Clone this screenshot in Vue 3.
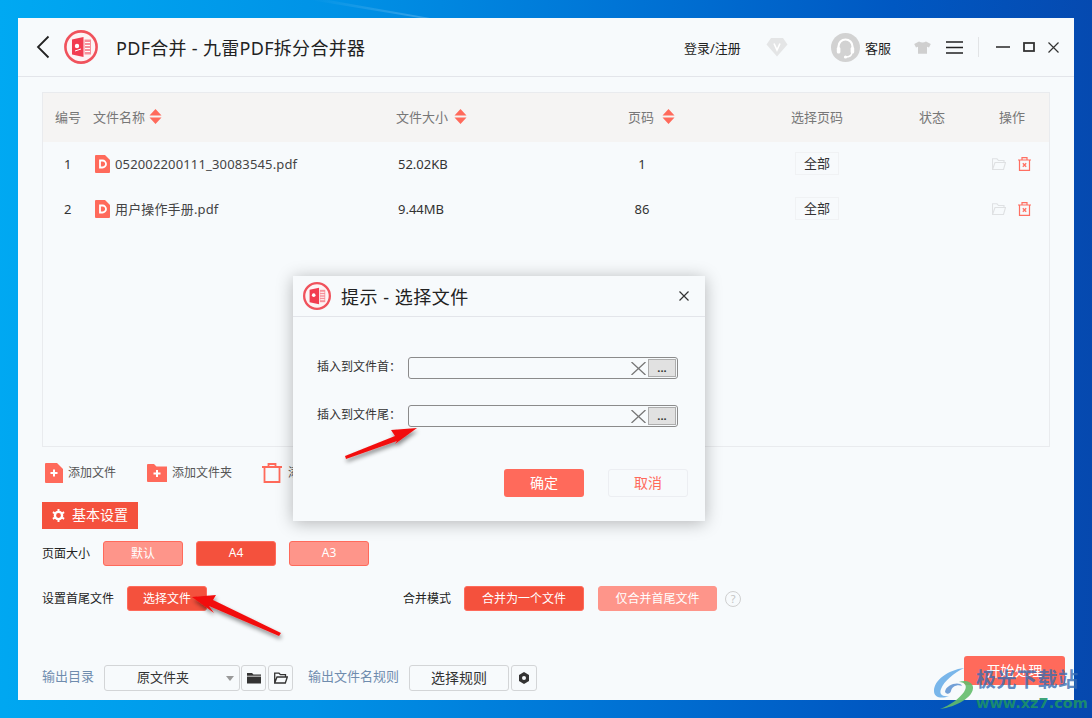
<script setup>
const columns = [
  { label: '编号', sort: false },
  { label: '文件名称', sort: true },
  { label: '文件大小', sort: true },
  { label: '页码', sort: true },
  { label: '选择页码', sort: false },
  { label: '状态', sort: false },
  { label: '操作', sort: false },
]

const files = [
  { id: 1, name: '052002200111_30083545.pdf', size: '52.02KB', pages: 1 },
  { id: 2, name: '用户操作手册.pdf', size: '9.44MB', pages: 86 },
]

const dialogRows = ['插入到文件首：', '插入到文件尾：']
</script>

<template>
  <div class="page">
    <svg class="streak" width="120" height="18" viewBox="0 0 120 18">
      <path d="M0 0 L18 0 L120 18 L110 18 Z" fill="url(#streakfill)" />
      <defs>
        <linearGradient id="streakfill" x1="0" x2="1">
          <stop offset="0" stop-color="#fff" stop-opacity="0" />
          <stop offset="1" stop-color="#fff" stop-opacity="0.22" />
        </linearGradient>
      </defs>
    </svg>

    <div class="window">
      <header class="head">
        <svg class="back" width="14" height="24" viewBox="0 0 14 24">
          <path d="M12.5 1.5 L2 12 L12.5 22.5" fill="none" stroke="#222" stroke-width="1.8" />
        </svg>
        <svg class="logo" width="34" height="34" viewBox="0 0 34 34">
          <circle cx="17" cy="17" r="15.6" fill="#fdf3f4" stroke="#f0525c" stroke-width="2.6" />
          <path d="M8 9.5 L19.5 7 V27 L8 24.5 Z" fill="#f23c50" />
          <path d="M20.5 9.5 H27 V24.5 H20.5 Z" fill="#f7909a" />
          <path d="M21 12.5 H26 M21 15.5 H26 M21 18.5 H26 M21 21.5 H26" stroke="#fff" stroke-width="1.2" />
          <circle cx="13" cy="16" r="2.2" fill="#fff" />
          <path d="M11 21 L17 19" stroke="#fff" stroke-width="1" />
        </svg>
        <h1 class="app-title">PDF合并 - 九雷PDF拆分合并器</h1>

        <span class="login">登录/注册</span>
        <svg class="vip" width="22" height="20" viewBox="0 0 22 20">
          <path d="M5 1 H17 L21.5 7.5 L11 19.5 L0.5 7.5 Z" fill="#e4e5e6" />
          <path d="M8 6.5 L11 13 L14 6.5" fill="none" stroke="#fff" stroke-width="1.6" />
        </svg>
        <svg class="agent" width="29" height="29" viewBox="0 0 29 29">
          <circle cx="14.5" cy="14.5" r="14.5" fill="#d2d2d2" />
          <path d="M7.5 16 V13.5 a7 7 0 0 1 14 0 V16" fill="none" stroke="#fff" stroke-width="2.2" />
          <rect x="5.8" y="14" width="3.6" height="6.5" rx="1.6" fill="#fff" />
          <rect x="19.6" y="14" width="3.6" height="6.5" rx="1.6" fill="#fff" />
          <path d="M21 20 Q20 24 15 24" fill="none" stroke="#fff" stroke-width="1.5" />
          <circle cx="14.5" cy="24" r="1.6" fill="#fff" />
        </svg>
        <span class="service">客服</span>
        <svg class="shirt" width="17" height="13" viewBox="0 0 17 13">
          <path d="M5 0.5 Q8.5 2.5 12 0.5 L16.8 3 L15 6.5 L13 5.8 V12.8 H4 V5.8 L2 6.5 L0.2 3 Z" fill="#cfcfcf" />
        </svg>
        <svg class="menu" width="17" height="13" viewBox="0 0 17 13">
          <path d="M0 1 H17 M0 6.5 H17 M0 12 H17" stroke="#222" stroke-width="1.4" />
        </svg>
        <i class="divider"></i>
        <svg class="win-btn min" width="14" height="14" viewBox="0 0 14 14">
          <path d="M0 7 H14" stroke="#333" stroke-width="1.6" />
        </svg>
        <svg class="win-btn max" width="12" height="10" viewBox="0 0 12 10">
          <rect x="1" y="1" width="10" height="8" fill="none" stroke="#333" stroke-width="1.8" />
        </svg>
        <svg class="win-btn close" width="11" height="11" viewBox="0 0 11 11">
          <path d="M0.5 0.5 L10.5 10.5 M10.5 0.5 L0.5 10.5" stroke="#333" stroke-width="1.2" />
        </svg>
      </header>

      <main class="body">
        <section class="table">
          <div class="row row-head">
            <div v-for="col in columns" :key="col.label" class="cell">
              {{ col.label }}
              <svg v-if="col.sort" class="sort" width="13" height="15" viewBox="0 0 12 15">
                <path d="M6 0 L12 6.5 H0 Z M0 8.5 H12 L6 15 Z" fill="#ff6a5b" />
              </svg>
            </div>
          </div>
          <div v-for="file in files" :key="file.id" class="row">
            <div class="cell num">{{ file.id }}</div>
            <div class="cell name">
              <svg width="15" height="18" viewBox="0 0 15 18">
                <path d="M1 0 H10 L15 5 V17 a1 1 0 0 1 -1 1 H1 a1 1 0 0 1 -1 -1 V1 a1 1 0 0 1 1 -1 Z" fill="#ff6a5b" />
                <path d="M5 5.5 H7.5 a3.5 3.5 0 0 1 0 7 H5 Z" fill="none" stroke="#fff" stroke-width="1.8" />
              </svg>
              {{ file.name }}
            </div>
            <div class="cell size">{{ file.size }}</div>
            <div class="cell pages">{{ file.pages }}</div>
            <div class="cell"><span class="all">全部</span></div>
            <div class="cell"></div>
            <div class="cell actions">
              <svg width="14" height="12" viewBox="0 0 14 12">
                <path d="M0.5 11.5 V0.8 H5 L6.5 2.5 H12 V4.5 M0.5 11.5 L3 4.5 H13.5 L11.5 11.5 Z" fill="none" stroke="#dfe1e3" stroke-width="1.1" />
              </svg>
              <svg width="13" height="14" viewBox="0 0 13 14">
                <path d="M0 3 H13 M4 3 V0.7 H9 V3 M1.5 3 V13.3 H11.5 V3" fill="none" stroke="#ff6f62" stroke-width="1.2" />
                <path d="M4.8 6.2 L8.2 9.8 M8.2 6.2 L4.8 9.8" stroke="#ff6f62" stroke-width="1.3" />
              </svg>
            </div>
          </div>
        </section>

        <div class="toolbar">
          <span class="tool">
            <svg width="18" height="20" viewBox="0 0 18 20">
              <path d="M0 1 a1 1 0 0 1 1 -1 H12 L18 6 V20 H1 a1 1 0 0 1 -1 -1 Z" fill="#ff6a5b" />
              <path d="M9 6.5 V13.5 M5.5 10 H12.5" stroke="#fff" stroke-width="2" />
            </svg>
            <span class="tool-text">添加文件</span>
          </span>
          <span class="tool second">
            <svg width="20" height="18" viewBox="0 0 20 18">
              <path d="M0 1 a1 1 0 0 1 1 -1 H7 L9.5 2.5 H20 V18 H1 a1 1 0 0 1 -1 -1 Z" fill="#ff6a5b" />
              <path d="M10 6 V13 M6.5 9.5 H13.5" stroke="#fff" stroke-width="2" />
            </svg>
            <span class="tool-text">添加文件夹</span>
          </span>
          <span class="tool third">
            <svg width="20" height="20" viewBox="0 0 20 20">
              <path d="M0 4 H20 M6.5 4 V1 H13.5 V4 M2.5 4 V19 H17.5 V4" fill="none" stroke="#ff6a5b" stroke-width="1.8" />
            </svg>
            <span class="tool-text">添加</span>
          </span>
        </div>

        <div class="tab">
          <svg width="13" height="13" viewBox="0 0 13 13">
            <circle cx="6.5" cy="6.5" r="3.6" fill="none" stroke="#fff" stroke-width="2.4" />
            <path d="M6.5 0 V13 M0.9 3.2 L12.1 9.8 M12.1 3.2 L0.9 9.8" stroke="#fff" stroke-width="2" stroke-dasharray="2.2 8.6 2.2" />
          </svg>
          <span class="tab-text">基本设置</span>
        </div>

        <div class="opt-row size-row">
          <span class="opt-label">页面大小</span>
          <button class="btn off">默认</button>
          <button class="btn on">A4</button>
          <button class="btn off">A3</button>
        </div>

        <div class="opt-row mode-row">
          <span class="opt-label">设置首尾文件</span>
          <button class="btn on pick">选择文件</button>
          <span class="opt-label mode-label">合并模式</span>
          <button class="btn on merge">合并为一个文件</button>
          <button class="btn off merge-ends">仅合并首尾文件</button>
          <span class="help">?</span>
        </div>

        <div class="output">
          <span class="out-label">输出目录</span>
          <div class="select">原文件夹<i class="caret"></i></div>
          <button class="square first-square">
            <svg width="14" height="12" viewBox="0 0 14 12">
              <path d="M0 1 H5 L6.5 2.5 H14 V11.5 H0 Z" fill="#333" />
              <path d="M0 4.2 H14" stroke="#fff" stroke-width="0.8" />
            </svg>
          </button>
          <button class="square">
            <svg width="14" height="12" viewBox="0 0 14 12">
              <path d="M0.7 11 V1.2 H5 L6.5 2.7 H11.5 V5 M0.7 11 L3 5 H13.3 L11.3 11 Z" fill="none" stroke="#333" stroke-width="1.3" />
            </svg>
          </button>
          <span class="out-label rule-label">输出文件名规则</span>
          <button class="rule">选择规则</button>
          <button class="square gear">
            <svg width="12" height="12" viewBox="0 0 12 12">
              <path d="M6 0 L11 3 V9 L6 12 L1 9 V3 Z" fill="#333" />
              <circle cx="6" cy="6" r="2" fill="#f7fafc" />
            </svg>
          </button>
          <button class="start">开始处理</button>
        </div>
      </main>

      <div class="dialog">
        <div class="dialog-head">
          <svg width="28" height="28" viewBox="0 0 34 34">
            <circle cx="17" cy="17" r="15.6" fill="#fdf3f4" stroke="#f0525c" stroke-width="2.8" />
            <path d="M8 9.5 L19.5 7 V27 L8 24.5 Z" fill="#f23c50" />
            <path d="M20.5 9.5 H27 V24.5 H20.5 Z" fill="#f7909a" />
            <path d="M21 12.5 H26 M21 15.5 H26 M21 18.5 H26 M21 21.5 H26" stroke="#fff" stroke-width="1.2" />
            <circle cx="13" cy="16" r="2.2" fill="#fff" />
          </svg>
          <span class="dialog-title">提示 - 选择文件</span>
          <svg class="dialog-close" width="10" height="10" viewBox="0 0 10 10">
            <path d="M0.5 0.5 L9.5 9.5 M9.5 0.5 L0.5 9.5" stroke="#333" stroke-width="1.2" />
          </svg>
        </div>
        <div class="dialog-body">
          <div v-for="label in dialogRows" :key="label" class="field">
            <span class="field-label">{{ label }}</span>
            <div class="input">
              <svg width="15" height="13" viewBox="0 0 15 13">
                <path d="M0.5 0 L14.5 13 M14.5 0 L0.5 13" stroke="#777" stroke-width="1.3" />
              </svg>
              <span class="browse">...</span>
            </div>
          </div>
        </div>
        <div class="dialog-foot">
          <button class="ok">确定</button>
          <button class="cancel">取消</button>
        </div>
      </div>
    </div>

    <svg class="arrows" width="1092" height="718" viewBox="0 0 1092 718">
      <defs>
        <filter id="arrowshadow" x="-20%" y="-40%" width="150%" height="200%">
          <feDropShadow dx="1" dy="3" stdDeviation="2" flood-color="#000" flood-opacity="0.45" />
        </filter>
      </defs>
      <g fill="#f21010" filter="url(#arrowshadow)">
        <path d="M417 428 L391 430 L395 436 L345 456 L346 459 L397 441 L395 444 Z" />
        <path d="M192 597 L216 595 L213 600 L281 633 L279 636 L209 606 L214 613 Z" />
      </g>
    </svg>

    <div class="watermark">
      <svg width="44" height="44" viewBox="0 0 44 44">
        <path d="M32 1 C16 3 2 13 2 24 C2 31 10 32 17 29 C10 30 7 27 9 22 C12 14 22 6 32 1 Z" fill="#6aaee8" opacity="0.9" />
        <path d="M13 25 C14 17 28 14 30 19 C26 17 20 19 19 24 C18 27 15 28 13 25 Z" fill="#5b8fd0" opacity="0.85" />
        <path d="M8 42 C24 40 42 30 41 20 C40 14 32 13 27 15 C33 15 36 19 32 25 C27 32 18 38 8 42 Z" fill="#63bd6c" opacity="0.9" />
      </svg>
      <div class="wm-text">
        <span class="wm-cn">极光下载站</span>
        <span class="wm-en">www.xz7.com</span>
      </div>
    </div>
  </div>
</template>

<style>
html,
body {
  margin: 0;
  overflow: hidden;
}
</style>

<style scoped>
.page {
  position: relative;
  width: 1092px;
  height: 718px;
  padding: 18px;
  box-sizing: border-box;
  overflow: hidden;
  background: linear-gradient(92deg, #00a9f2 0%, #0092e6 30%, #0075d6 55%, #0058c2 80%, #0648ae 100%);
  font-family: "Noto Sans", "Noto Sans CJK SC", sans-serif;
  color: #333;
}

.streak {
  position: absolute;
  left: 310px;
  top: 0;
}

button {
  font-family: inherit;
  padding: 0;
  cursor: pointer;
}

.window {
  position: relative;
  width: 1056px;
  height: 682px;
  background: #f7fafc;
  display: flex;
  flex-direction: column;
}

.head {
  height: 58px;
  flex: none;
  display: flex;
  align-items: center;
  padding-left: 18px;
  border-bottom: 1px solid #e3e5ea;
}

.logo {
  margin-left: 14px;
}

.app-title {
  margin: 0 0 0 18px;
  font-size: 18px;
  letter-spacing: 0.3px;
  font-weight: 400;
  color: #222;
  white-space: nowrap;
  width: 568px;
}

.login {
  font-size: 13px;
  color: #222;
  width: 58px;
  white-space: nowrap;
}

.vip {
  margin-left: 24px;
}

.agent {
  margin-left: 43px;
}

.service {
  margin-left: 5px;
  font-size: 13px;
  color: #222;
}

.shirt {
  margin-left: 23px;
}

.menu {
  margin-left: 15px;
}

.divider {
  width: 1px;
  height: 20px;
  margin-left: 15px;
  background: #e2e4e6;
}

.min {
  margin-left: 17px;
}

.max {
  margin-left: 13px;
}

.close {
  margin-left: 13px;
}

.body {
  flex: 1;
  padding: 15px 24px 0;
  display: flex;
  flex-direction: column;
  min-height: 0;
}

.table {
  height: 355px;
  flex: none;
  box-sizing: border-box;
  border: 1px solid #e9ebee;
}

.row {
  display: grid;
  grid-template-columns: 50px 303px 232px 130px 118px 112px 61px;
  height: 45px;
  box-sizing: border-box;
  padding-bottom: 2px;
  align-items: center;
  font-size: 13px;
}

.row-head {
  height: 49px;
  background: #f5f4f3;
  color: #777;
}

.cell {
  display: flex;
  align-items: center;
  white-space: nowrap;
}

.row-head .cell:first-child {
  padding-left: 12px;
}

.row-head .cell:nth-child(n + 5) {
  justify-content: center;
}

.row-head .cell:last-child {
  padding-right: 13px;
}

.row-head .sort {
  margin-left: 4px;
}

.row-head .cell:nth-child(3) .sort {
  margin-left: 6px;
}

.row-head .cell:nth-child(4) .sort {
  margin-left: 8px;
}

.row .cell:nth-child(5) {
  justify-content: center;
}

.num {
  padding-left: 21px;
}

.name {
  gap: 5px;
  padding-left: 2px;
  letter-spacing: 0.15px;
  color: #444;
}

.size {
  padding-left: 2px;
}

.pages {
  width: 28px;
  justify-content: center;
}

.all {
  border: 1px solid #f0f2f4;
  padding: 0 8px;
  line-height: 21px;
  color: #333;
}

.actions {
  gap: 12px;
  padding-left: 4px;
}

.toolbar {
  margin-top: 13px;
  height: 26px;
  flex: none;
  display: flex;
  align-items: center;
  font-size: 12px;
  color: #555;
}

.tool {
  display: flex;
  align-items: center;
  gap: 5px;
  margin-left: 3px;
  white-space: nowrap;
}

.tool-text {
  margin-top: -2px;
}

.second {
  margin-left: 31px;
}

.third {
  margin-left: 30px;
  gap: 6px;
}

.tab {
  margin-top: 16px;
  width: 96px;
  height: 27px;
  flex: none;
  box-sizing: border-box;
  display: flex;
  align-items: center;
  gap: 7px;
  padding-left: 10px;
  background: #f4513d;
  color: #fff;
  font-size: 14px;
}

.tab-text {
  margin-top: -3px;
}

.opt-row {
  display: flex;
  align-items: center;
  height: 25px;
  flex: none;
}

.size-row {
  margin-top: 12px;
}

.mode-row {
  margin-top: 20px;
}

.opt-label {
  font-size: 12px;
  color: #222;
  white-space: nowrap;
  margin-top: -2px;
}

.btn {
  width: 80px;
  height: 25px;
  padding-bottom: 2px;
  border-radius: 3px;
  border: 1px solid #ff6a5b;
  color: #fff;
  font-size: 12px;
  margin-left: 13px;
}

.on {
  background: #f4513d;
}

.off {
  background: #fe958a;
}

.mode-label {
  margin-left: 196px;
}

.merge {
  width: 120px;
}

.merge-ends {
  width: 119px;
  margin-left: 14px;
  border-color: #fe958a;
}

.help {
  width: 16px;
  height: 16px;
  margin-left: 8px;
  box-sizing: border-box;
  border: 1.5px solid #cfcfcf;
  border-radius: 50%;
  color: #c4c4c4;
  font-size: 11px;
  line-height: 13px;
  text-align: center;
}

.output {
  margin-top: 54px;
  margin-right: -15px;
  display: flex;
  align-items: center;
  height: 26px;
  flex: none;
}

.out-label {
  font-size: 13px;
  color: #6f8cae;
  white-space: nowrap;
  margin-top: -5px;
}

.select {
  position: relative;
  width: 136px;
  height: 26px;
  margin-left: 10px;
  box-sizing: border-box;
  border: 1px solid #d3d5d7;
  border-radius: 3px;
  font-size: 13px;
  line-height: 22px;
  padding-left: 32px;
  color: #333;
}

.caret {
  position: absolute;
  right: 5px;
  top: 10px;
  border: 4px solid transparent;
  border-top: 5px solid #999;
  border-bottom: 0;
}

.square {
  width: 25px;
  height: 26px;
  margin-left: 2px;
  background: transparent;
  border: 1px solid #d3d5d7;
  border-radius: 3px;
  display: flex;
  align-items: center;
  justify-content: center;
}

.first-square {
  margin-left: 1px;
}

.rule-label {
  margin-left: 15px;
}

.rule {
  width: 100px;
  height: 26px;
  padding-bottom: 2px;
  margin-left: 10px;
  background: transparent;
  border: 1px solid #d3d5d7;
  border-radius: 3px;
  font-size: 14px;
  color: #333;
}

.gear {
  width: 26px;
}

.start {
  margin-left: auto;
  margin-top: -9px;
  align-self: flex-start;
  width: 101px;
  height: 29px;
  padding-bottom: 2px;
  border: 0;
  border-radius: 3px;
  background: #ff6a5b;
  color: #fff;
  font-size: 14px;
}

.dialog {
  position: absolute;
  left: 275px;
  top: 258px;
  width: 412px;
  height: 245px;
  background: #f7fafc;
  box-shadow: 0 2px 16px rgba(0, 0, 0, 0.28);
  display: flex;
  flex-direction: column;
}

.dialog-head {
  height: 40px;
  flex: none;
  display: flex;
  align-items: center;
  padding-left: 10px;
  border-bottom: 1px solid #e3e5ea;
}

.dialog-title {
  margin-left: 10px;
  font-size: 18px;
  letter-spacing: 0.5px;
  color: #222;
}

.dialog-close {
  margin-left: auto;
  margin-right: 16px;
}

.dialog-body {
  padding: 40px 27px 0 24px;
  display: flex;
  flex-direction: column;
  gap: 26px;
}

.field {
  display: flex;
  align-items: center;
  height: 22px;
}

.field-label {
  width: 91px;
  flex: none;
  margin-top: -4px;
  font-size: 12px;
  color: #333;
  white-space: nowrap;
}

.input {
  flex: 1;
  height: 22px;
  box-sizing: border-box;
  border: 1px solid #8b8b8b;
  border-radius: 3px;
  display: flex;
  align-items: center;
  justify-content: flex-end;
  gap: 2px;
  padding-right: 1px;
  background: #f7fafc;
}

.browse {
  width: 28px;
  height: 18px;
  box-sizing: border-box;
  border: 1px solid #adadad;
  background: #e1e1e1;
  font-size: 11px;
  font-weight: 700;
  line-height: 16px;
  text-align: center;
  color: #333;
}

.dialog-foot {
  margin-top: 42px;
  padding-left: 211px;
  display: flex;
  gap: 24px;
}

.ok,
.cancel {
  width: 80px;
  height: 28px;
  padding-bottom: 2px;
  border-radius: 3px;
  font-size: 14px;
}

.ok {
  background: #ff6a5b;
  border: 0;
  color: #fff;
}

.cancel {
  background: transparent;
  border: 1px solid #eceef2;
  color: #ff6a5b;
}

.arrows {
  position: absolute;
  left: 0;
  top: 0;
  pointer-events: none;
}

.watermark {
  position: absolute;
  left: 932px;
  top: 667px;
  display: flex;
  pointer-events: none;
}

.wm-text {
  display: flex;
  flex-direction: column;
  width: 110px;
}

.wm-cn {
  font-size: 20px;
  font-weight: 700;
  letter-spacing: 0.5px;
  line-height: 26px;
  color: rgba(54, 108, 178, 0.8);
  white-space: nowrap;
}

.wm-en {
  font-family: "DejaVu Sans", sans-serif;
  font-size: 14.5px;
  font-weight: 700;
  line-height: 18px;
  margin-top: 1px;
  color: rgba(30, 150, 100, 0.85);
  white-space: nowrap;
}
</style>
